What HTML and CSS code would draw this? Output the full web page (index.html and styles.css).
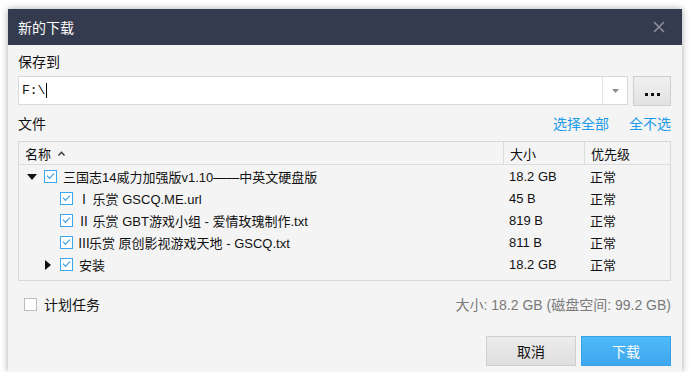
FILE: index.html
```html
<!DOCTYPE html>
<html lang="zh-CN">
<head>
    <meta charset="UTF-8">
    <title>新的下载</title>
    <link rel="stylesheet" href="styles.css">
</head>
<body>
    <div class="dialog">
        <div class="titlebar">
            <span class="title">新的下载</span>
            <svg class="close" width="12" height="12" viewBox="0 0 12 12"><path d="M1 1L11 11M11 1L1 11" stroke="#8b909a" stroke-width="1.6" fill="none"/></svg>
        </div>
        <div class="content">
            <div class="label">保存到</div>
            <div class="path-row">
                <div class="path-input">
                    <span class="path-text">F:\</span><span class="caret"></span>
                    <span class="drop"><svg width="7" height="4" viewBox="0 0 7 4"><path d="M0 0H7L3.5 4Z" fill="#8c8c8c"/></svg></span>
                </div>
                <div class="browse"><i></i><i></i><i></i></div>
            </div>

            <div class="files-head">
                <span class="label">文件</span>
                <span class="links"><a>选择全部</a><a>全不选</a></span>
            </div>

            <div class="table">
                <div class="thead">
                    <div class="th">名称 <svg class="sort" width="7" height="5" viewBox="0 0 7 5"><path d="M0.5 4.5L3.5 1.3L6.5 4.5" stroke="#333" stroke-width="1.3" fill="none"/></svg></div>
                    <div class="th">大小</div>
                    <div class="th">优先级</div>
                </div>
                <div class="tr">
                    <div class="td name"><span class="arrow down"></span><span class="cb on"></span>三国志14威力加强版v1.10——中英文硬盘版</div>
                    <div class="td">18.2 GB</div>
                    <div class="td">正常</div>
                </div>
                <div class="tr">
                    <div class="td name lvl1"><span class="arrow"></span><span class="cb on"></span><span class="num">Ⅰ</span>&nbsp;乐赏 GSCQ.ME.url</div>
                    <div class="td">45 B</div>
                    <div class="td">正常</div>
                </div>
                <div class="tr">
                    <div class="td name lvl1"><span class="arrow"></span><span class="cb on"></span><span class="num">Ⅱ</span>&nbsp;乐赏 GBT游戏小组 - 爱情玫瑰制作.txt</div>
                    <div class="td">819 B</div>
                    <div class="td">正常</div>
                </div>
                <div class="tr">
                    <div class="td name lvl1"><span class="arrow"></span><span class="cb on"></span><span class="num">Ⅲ</span>乐赏 原创影视游戏天地 - GSCQ.txt</div>
                    <div class="td">811 B</div>
                    <div class="td">正常</div>
                </div>
                <div class="tr">
                    <div class="td name lvl1"><span class="arrow right"></span><span class="cb on"></span>安装</div>
                    <div class="td">18.2 GB</div>
                    <div class="td">正常</div>
                </div>
            </div>

            <div class="bottom-row">
                <span class="task"><span class="cb"></span>计划任务</span>
                <span class="space">大小: 18.2 GB (磁盘空间: 99.2 GB)</span>
            </div>

            <div class="buttons">
                <button class="btn">取消</button>
                <button class="btn primary">下载</button>
            </div>
        </div>
    </div>
</body>
</html>
```

FILE: styles.css
```css
/* base */
body {
    margin: 0;
    padding: 9px 0 0 8px;
    background-color: #ffffff;
    font-family: "Liberation Sans", "Noto Sans CJK SC", sans-serif;
    color: #111;
}

.dialog {
    width: 674px;
    height: 363px;
    background-color: #f4f4f4;
    box-shadow: 0 0 7px rgba(0, 0, 0, 0.35);
}

/* title bar */
.titlebar {
    height: 36px;
    background-color: #343b4e;
    display: flex;
    align-items: center;
    justify-content: space-between;
    padding: 0 17px 0 10px;
}

.title {
    color: #fff;
    font-size: 14px;
}

.content {
    padding: 7px 11px 0 10px;
}

.label {
    font-size: 14px;
    line-height: 20px;
}

/* save path */
.path-row {
    display: flex;
    align-items: flex-start;
    gap: 5px;
    height: 29px;
    margin-top: 4px;
}

.path-input {
    flex: 1;
    height: 27px;
    background-color: #fff;
    border: 1px solid #d9d9d9;
    display: flex;
    align-items: center;
    padding-left: 3px;
}

.path-text {
    font-family: "Liberation Mono", monospace;
    font-size: 13px;
}

.caret {
    width: 1px;
    height: 15px;
    background-color: #000;
    margin-left: 1px;
}

.drop {
    margin-left: auto;
    width: 24px;
    height: 27px;
    border-left: 1px solid #e3e3e3;
    display: flex;
    align-items: center;
    justify-content: center;
}

.browse {
    width: 36px;
    height: 28px;
    border: 1px solid #cfcfcf;
    background: linear-gradient(#f0f0f0, #e2e2e2);
    display: flex;
    align-items: flex-end;
    justify-content: center;
    gap: 3px;
}

.browse i {
    width: 3px;
    height: 3px;
    background-color: #111;
    margin-bottom: 9px;
}

/* files */
.files-head {
    display: flex;
    justify-content: space-between;
    align-items: center;
    height: 20px;
    line-height: 20px;
    margin-top: 9px;
}

.links a {
    color: #1b9be8;
    font-size: 14px;
    margin-left: 20px;
    cursor: pointer;
}

.table {
    margin-top: 7px;
    height: 138px;
    border: 1px solid #d8d8d8;
    font-size: 13px;
}

.thead, .tr {
    display: grid;
    grid-template-columns: 484px 81px 1fr;
}

.thead {
    height: 22px;
    border-bottom: 1px solid #dcdcdc;
}

.th {
    display: flex;
    align-items: center;
    padding-left: 6px;
    border-left: 1px solid #dcdcdc;
}

.th:first-child {
    border-left: none;
}

.sort {
    margin-left: 7px;
}

.tr {
    height: 22px;
}

.td {
    display: flex;
    align-items: center;
    padding-left: 6px;
    white-space: pre;
}

.td.name {
    padding-left: 8px;
}

.td.lvl1 {
    padding-left: 24px;
}

.num {
    display: inline-flex;
    justify-content: center;
    width: 10px;
    flex: none;
}

.arrow {
    width: 10px;
    height: 10px;
    margin-right: 7px;
}

.arrow.down {
    width: 0;
    height: 0;
    border-left: 5px solid transparent;
    border-right: 5px solid transparent;
    border-top: 6px solid #111;
    margin-top: 2px;
}

.arrow.right {
    width: 0;
    height: 0;
    border-top: 5px solid transparent;
    border-bottom: 5px solid transparent;
    border-left: 6px solid #111;
    margin-right: 9px;
    margin-left: 2px;
    margin-top: 1px;
}

.cb {
    width: 11px;
    height: 11px;
    border: 1px solid #bdbdbd;
    background-color: #fff;
    margin-right: 6px;
    flex: none;
    position: relative;
}

.cb.on {
    border-color: #3aa8ee;
}

.cb.on::after {
    content: "";
    position: absolute;
    left: 2px;
    top: 2px;
    width: 6px;
    height: 3px;
    border-left: 1.5px solid #2a9ae6;
    border-bottom: 1.5px solid #2a9ae6;
    transform: rotate(-45deg);
}

/* bottom */
.bottom-row {
    display: flex;
    justify-content: space-between;
    align-items: center;
    height: 20px;
    margin-top: 13px;
    font-size: 14px;
}

.task {
    display: flex;
    align-items: center;
    padding-left: 6px;
}

.task .cb {
    margin-right: 7px;
}

.space {
    color: #7a7a7a;
}

.buttons {
    display: flex;
    justify-content: flex-end;
    gap: 5px;
    margin-top: 22px;
}

.btn {
    width: 90px;
    height: 30px;
    font-family: "Liberation Sans", "Noto Sans CJK SC", sans-serif;
    font-size: 14px;
    color: #111;
    border: 1px solid #cfcfcf;
    background: linear-gradient(#ececec, #dedede);
}

.btn.primary {
    color: #fff;
    border-color: #35a2ea;
    background: linear-gradient(#4fbaf9, #3ea7ee);
}
```
